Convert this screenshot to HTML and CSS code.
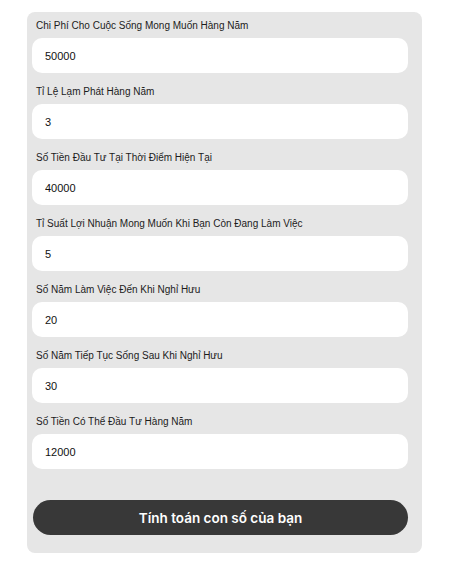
FILE: index.html
```html
<!DOCTYPE html>
<html lang="vi">
<head>
<meta charset="utf-8">
<link rel="stylesheet" href="styles.css">
</head>
<body>
<form class="card">
  <div class="field">
    <label class="label">Chi Phí Cho Cuộc Sống Mong Muốn Hàng Năm</label>
    <input class="input" type="text" value="50000">
  </div>
  <div class="field">
    <label class="label">Tỉ Lệ Lạm Phát Hàng Năm</label>
    <input class="input" type="text" value="3">
  </div>
  <div class="field">
    <label class="label">Số Tiền Đầu Tư Tại Thời Điểm Hiện Tại</label>
    <input class="input" type="text" value="40000">
  </div>
  <div class="field">
    <label class="label">Tỉ Suất Lợi Nhuận Mong Muốn Khi Bạn Còn Đang Làm Việc</label>
    <input class="input" type="text" value="5">
  </div>
  <div class="field">
    <label class="label">Số Năm Làm Việc Đến Khi Nghỉ Hưu</label>
    <input class="input" type="text" value="20">
  </div>
  <div class="field">
    <label class="label">Số Năm Tiếp Tục Sống Sau Khi Nghỉ Hưu</label>
    <input class="input" type="text" value="30">
  </div>
  <div class="field">
    <label class="label">Số Tiền Có Thể Đầu Tư Hàng Năm</label>
    <input class="input" type="text" value="12000">
  </div>
  <button class="button" type="button">Tính toán con số của bạn</button>
</form>
</body>
</html>
```
FILE: styles.css
```css
html, body {
  margin: 0;
  padding: 0;
  background: #ffffff;
}
body {
  font-family: "Liberation Sans", Arial, sans-serif;
}
.card {
  box-sizing: border-box;
  width: 395px;
  margin: 12px 0 0 27px;
  padding: 8px 14px 18px 5px;
  background: #e6e6e6;
  border-radius: 8px;
  display: flex;
  flex-direction: column;
  gap: 13px;
}
.field {
  display: flex;
  flex-direction: column;
  gap: 6px;
}
.label {
  display: block;
  font-size: 10px;
  line-height: 12px;
  color: #1c1c1c;
  padding-left: 4px;
}
.input {
  box-sizing: border-box;
  width: 100%;
  height: 35px;
  margin: 0;
  border: none;
  outline: none;
  border-radius: 10px;
  background: #ffffff;
  padding: 0 13px;
  font-family: "Liberation Sans", Arial, sans-serif;
  font-size: 11px;
  color: #111111;
}
.button {
  box-sizing: border-box;
  margin: 18px 0 0 1px;
  width: 375px;
  height: 35px;
  border: none;
  border-radius: 18px;
  background: #383838;
  color: #ffffff;
  font-family: "Inter", "Lato", sans-serif;
  font-weight: 600;
  font-size: 13.5px;
  cursor: pointer;
}
```
